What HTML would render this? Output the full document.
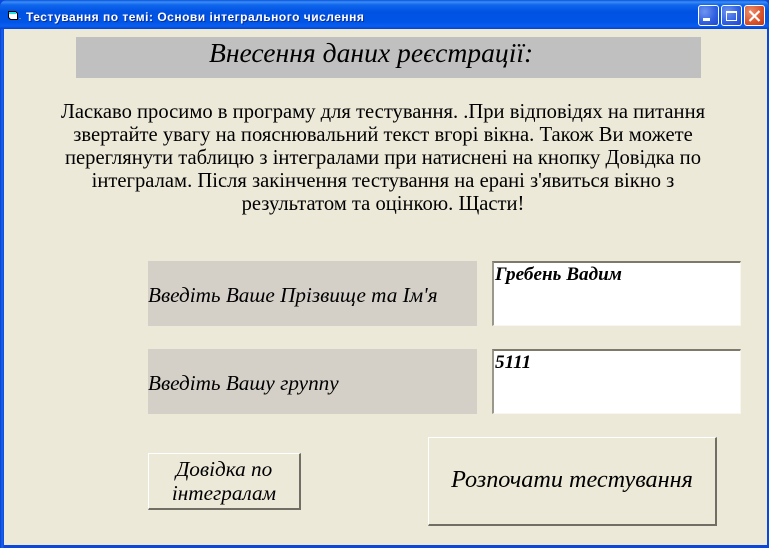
<!DOCTYPE html>
<html lang="uk">
<head>
<meta charset="utf-8">
<title>Тестування</title>
<style>
html,body{margin:0;padding:0;background:#0a44d8;}
#win{position:relative;width:769px;height:548px;overflow:hidden;background:#0b47dc;font-family:"Liberation Serif","DejaVu Serif",serif;color:#000;}
#bar{position:absolute;left:0;top:0;width:769px;height:29px;background:linear-gradient(to bottom,#0a53dc 0,#3a8cf6 2px,#0f66ec 5px,#0052e2 12px,#0054e6 22px,#0a5ef0 26px,#0544d0 29px);border-radius:7px 7px 0 0;}
#sideL{position:absolute;left:0;top:29px;width:4px;height:519px;background:linear-gradient(to right,#0a3fc8,#1a62ee 50%,#0a4ae0);}
#sideR{position:absolute;right:0;top:29px;width:3px;height:519px;background:#0a48dc;}
#client{position:absolute;left:4px;top:29px;width:763px;height:516px;background:#ece9d8;}
#title{position:absolute;left:26px;top:10px;font:bold 12px "Liberation Sans",sans-serif;color:#fff;white-space:nowrap;text-shadow:1px 1px 0 #0a2e9c;letter-spacing:.5px;line-height:15px;}
.abs{position:absolute;}
#cap{left:76px;top:37px;width:625px;height:41px;background:#c0c0c0;}
#cap span{position:absolute;left:133px;top:-1px;font-style:italic;font-size:27.6px;line-height:34px;white-space:nowrap;}
#para{left:33px;top:101px;width:700px;font-size:20.6px;line-height:23px;text-align:center;}
.lab{left:148px;width:329px;height:65px;background:#d4d0c8;font-style:italic;font-size:21.2px;line-height:24px;white-space:nowrap;}
.lab span{position:absolute;left:0;top:22px;}
.inp{left:492px;width:249px;height:65px;box-sizing:border-box;background:#fff;border-style:solid;border-width:2px 1px 1px 2px;border-color:#7d7a6c #f8f6ee #f8f6ee #9a988a;font:italic bold 19.2px/21px "Liberation Serif",serif;padding:1px 0 0 1px;}
.btn{box-sizing:border-box;background:#ece9d8;border-style:solid;border-width:1px 2px 2px 1px;border-color:#fff #716f64 #716f64 #fff;font-style:italic;text-align:center;}
#b1{left:148px;top:453px;width:153px;height:57px;font-size:21.2px;line-height:24px;padding-top:3px;}
#b2{left:428px;top:437px;width:289px;height:89px;font-size:24.2px;line-height:28px;padding-top:28px;}
.wb{position:absolute;top:5px;width:21px;height:21px;box-sizing:border-box;border:1px solid #fff;border-radius:3px;background:radial-gradient(circle at 30% 30%,#6f94f0,#2f5fe0 60%,#2248c8);}
#wc{background:radial-gradient(circle at 30% 30%,#ec8e6c,#d8522a 60%,#bd3a18);}
</style>
</head>
<body>
<div id="win">
  <div id="bar"></div>
  <div id="sideL"></div>
  <div id="sideR"></div>
  <div id="client"></div>

  <svg class="abs" style="left:7px;top:9px" width="15" height="14" viewBox="0 0 15 14">
    <path d="M1.5 2.5H8.5L10.5 4.5V10.5H3.5L1.5 8.5Z" fill="#fff" stroke="#000" stroke-width="1"/>
    <rect x="2" y="3" width="7" height="2" fill="#26e0dc"/>
    <rect x="12" y="9" width="2" height="1" fill="#8a8a70"/>
  </svg>
  <div id="title">Тестування по темі: Основи інтегрального числення</div>

  <div class="wb" style="left:698px">
    <div class="abs" style="left:4px;top:12px;width:7px;height:3px;background:#fff"></div>
  </div>
  <div class="wb" style="left:721px">
    <div class="abs" style="left:4px;top:5px;width:11px;height:10px;box-sizing:border-box;border:1px solid #fff;border-top-width:2px"></div>
  </div>
  <div class="wb" id="wc" style="left:744px">
    <svg class="abs" style="left:3px;top:3px" width="13" height="13" viewBox="0 0 13 13">
      <path d="M1.5 2L11.5 12M11.5 2L1.5 12" stroke="#fff" stroke-width="2.2" fill="none"/>
    </svg>
  </div>

  <div id="cap" class="abs"><span>Внесення даних реєстрації:</span></div>

  <div id="para" class="abs">Ласкаво просимо в програму для тестування. .При відповідях на питання<br>звертайте увагу на пояснювальний текст вгорі вікна. Також Ви можете<br>переглянути таблицю з інтегралами при натиснені на кнопку Довідка по<br>інтегралам. Після закінчення тестування на ерані з'явиться вікно з<br>результатом та оцінкою. Щасти!</div>

  <div class="abs lab" style="top:261px"><span>Введіть Ваше Прізвище та Ім'я</span></div>
  <div class="abs lab" style="top:349px"><span>Введіть Вашу группу</span></div>

  <div class="abs inp" style="top:261px">Гребень Вадим</div>
  <div class="abs inp" style="top:349px">5111</div>

  <div id="b1" class="abs btn">Довідка по<br>інтегралам</div>
  <div id="b2" class="abs btn">Розпочати тестування</div>
</div>
</body>
</html>
